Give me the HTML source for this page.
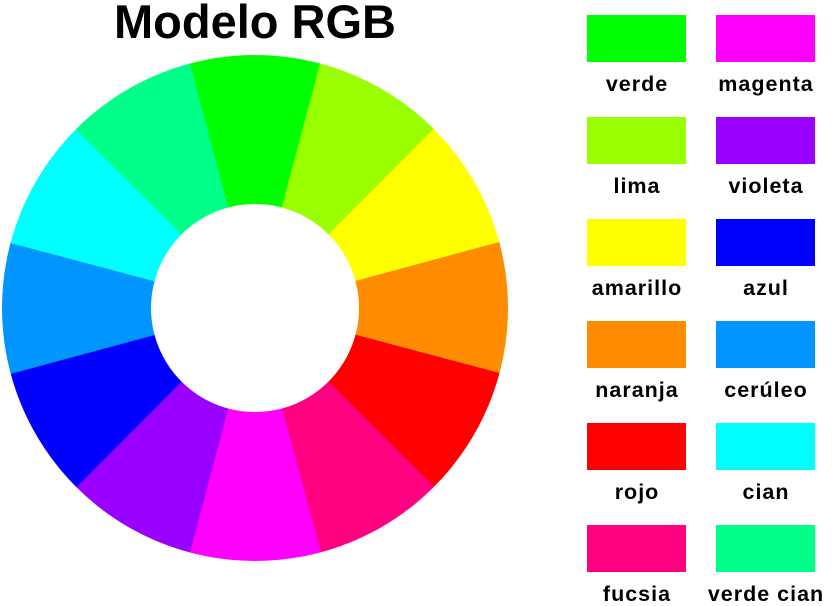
<!DOCTYPE html>
<html><head><meta charset="utf-8"><style>
body{margin:0;width:832px;height:603px;background:#fff;overflow:hidden;position:relative;font-family:"Liberation Sans",Arial,sans-serif;font-weight:bold}
.t{position:absolute;left:0;width:510px;top:-6px;text-align:center;font-size:47px}
.sw{position:absolute;width:99px;height:47px}
.lb{position:absolute;width:160px;text-align:center;font-size:21.5px;line-height:20px;letter-spacing:1px}
</style></head><body>
<div class="t">Modelo RGB</div>
<svg width="832" height="603" style="position:absolute;left:0;top:0">
<defs><clipPath id="c"><circle cx="0" cy="0" r="253"/></clipPath></defs>
<g transform="translate(255,308)" clip-path="url(#c)">
<polygon points="0,0 -81,-300 81,-300" fill="#00ff00" transform="rotate(0)"/>
<polygon points="0,0 -81,-300 81,-300" fill="#99ff00" transform="rotate(30)"/>
<polygon points="0,0 -81,-300 81,-300" fill="#ffff00" transform="rotate(60)"/>
<polygon points="0,0 -81,-300 81,-300" fill="#ff8c00" transform="rotate(90)"/>
<polygon points="0,0 -81,-300 81,-300" fill="#ff0000" transform="rotate(120)"/>
<polygon points="0,0 -81,-300 81,-300" fill="#ff0080" transform="rotate(150)"/>
<polygon points="0,0 -81,-300 81,-300" fill="#ff00ff" transform="rotate(180)"/>
<polygon points="0,0 -81,-300 81,-300" fill="#9900ff" transform="rotate(210)"/>
<polygon points="0,0 -81,-300 81,-300" fill="#0000ff" transform="rotate(240)"/>
<polygon points="0,0 -81,-300 81,-300" fill="#0095ff" transform="rotate(270)"/>
<polygon points="0,0 -81,-300 81,-300" fill="#00ffff" transform="rotate(300)"/>
<polygon points="0,0 -81,-300 81,-300" fill="#00ff88" transform="rotate(330)"/>
<circle r="104" fill="#fff"/>
</g></svg>
<div class="sw" style="left:587px;top:15px;background:#00ff00"></div><div class="lb" style="left:557px;top:74px">verde</div>
<div class="sw" style="left:716px;top:15px;background:#ff00ff"></div><div class="lb" style="left:686px;top:74px">magenta</div>
<div class="sw" style="left:587px;top:117px;background:#99ff00"></div><div class="lb" style="left:557px;top:176px">lima</div>
<div class="sw" style="left:716px;top:117px;background:#9900ff"></div><div class="lb" style="left:686px;top:176px">violeta</div>
<div class="sw" style="left:587px;top:219px;background:#ffff00"></div><div class="lb" style="left:557px;top:278px">amarillo</div>
<div class="sw" style="left:716px;top:219px;background:#0000ff"></div><div class="lb" style="left:686px;top:278px">azul</div>
<div class="sw" style="left:587px;top:321px;background:#ff8c00"></div><div class="lb" style="left:557px;top:380px">naranja</div>
<div class="sw" style="left:716px;top:321px;background:#0095ff"></div><div class="lb" style="left:686px;top:380px">cerúleo</div>
<div class="sw" style="left:587px;top:423px;background:#ff0000"></div><div class="lb" style="left:557px;top:482px">rojo</div>
<div class="sw" style="left:716px;top:423px;background:#00ffff"></div><div class="lb" style="left:686px;top:482px">cian</div>
<div class="sw" style="left:587px;top:525px;background:#ff0080"></div><div class="lb" style="left:557px;top:584px">fucsia</div>
<div class="sw" style="left:716px;top:525px;background:#00ff88"></div><div class="lb" style="left:686px;top:584px">verde cian</div>
</body></html>
